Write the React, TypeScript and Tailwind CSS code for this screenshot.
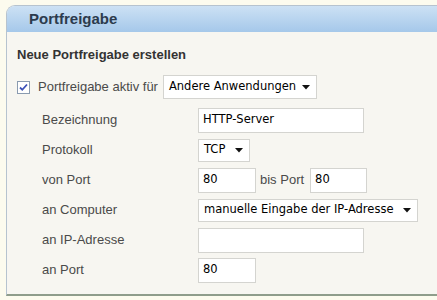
import React from 'react';

const label = "font-['Liberation_Sans',Arial,sans-serif] text-[13px] text-[#4a4a4a]";
const field = "font-['DejaVu_Sans',Tahoma,sans-serif] text-[11.5px] text-black";

const TextBox: React.FC<{ value?: string; width: string }> = ({ value = '', width }) => (
  <div className={`${width} h-[25px] bg-white border border-[#d4d4d0] flex items-center px-[4px] ${field}`}>
    {value}
  </div>
);

const SelectBox: React.FC<{ value: string; width: string; height?: string }> = ({ value, width, height = 'h-[23px]' }) => (
  <div className={`${width} ${height} bg-white border border-[#d4d4d0] flex items-center justify-between pl-[5px] pr-[6px] ${field}`}>
    <span className="whitespace-nowrap">{value}</span>
    <svg width="8" height="5" viewBox="0 0 8 5" className="shrink-0">
      <path d="M0 0h8L4 4.5z" fill="#111" />
    </svg>
  </div>
);

const Row: React.FC<{ name: string; children: React.ReactNode }> = ({ name, children }) => (
  <div className="flex items-center h-[30px]">
    <div className={`w-[181px] pl-[25px] ${label}`}>{name}</div>
    <div className="flex items-center">{children}</div>
  </div>
);

export default function App() {
  return (
    <div className="w-[437px] h-[300px] bg-[#fcfbee] pt-[5px] pl-[6px] overflow-hidden">
      <div className="h-[291px] flex flex-col border-l border-t border-[#b6c3cf] rounded-tl-[9px] bg-[#f7f6f1] border-b-2 border-b-[#8f9d8b] overflow-hidden">
        <div className="h-[26px] shrink-0 bg-gradient-to-b from-[#cce1f4] to-[#a5c8ea] flex items-center pl-[22px]">
          <span className="font-['Liberation_Sans',Arial,sans-serif] font-bold text-[15px] text-[#2c3b4d]">Portfreigabe</span>
        </div>
        <div className="pl-[10px] pt-[14px]">
          <div className="font-['Liberation_Sans',Arial,sans-serif] font-bold text-[13px] text-[#333] h-[18px] leading-[18px]">
            Neue Portfreigabe erstellen
          </div>
          <div className="flex items-center mt-[11px] h-[24px]">
            <div className="w-[13px] h-[13px] border border-[#8a9bb0] bg-white flex items-center justify-center">
              <svg width="9" height="9" viewBox="0 0 9 9">
                <path d="M1 4.5l2.3 2.3L8 1.5" stroke="#3d52b8" strokeWidth="1.8" fill="none" />
              </svg>
            </div>
            <span className={`ml-[8px] ${label}`}>Portfreigabe aktiv für</span>
            <div className="ml-[5px]">
              <SelectBox value="Andere Anwendungen" width="w-[154px]" height="h-[24px]" />
            </div>
          </div>
          <div className="mt-[6px]">
            <Row name="Bezeichnung">
              <TextBox value="HTTP-Server" width="w-[166px]" />
            </Row>
            <Row name="Protokoll">
              <SelectBox value="TCP" width="w-[52px]" />
            </Row>
            <Row name="von Port">
              <TextBox value="80" width="w-[58px]" />
              <span className={`ml-[4px] mr-[6px] ${label}`}>bis Port</span>
              <TextBox value="80" width="w-[57px]" />
            </Row>
            <Row name="an Computer">
              <SelectBox value="manuelle Eingabe der IP-Adresse" width="w-[220px]" />
            </Row>
            <Row name="an IP-Adresse">
              <TextBox width="w-[166px]" />
            </Row>
            <Row name="an Port">
              <TextBox value="80" width="w-[58px]" />
            </Row>
          </div>
        </div>
      </div>
    </div>
  );
}
